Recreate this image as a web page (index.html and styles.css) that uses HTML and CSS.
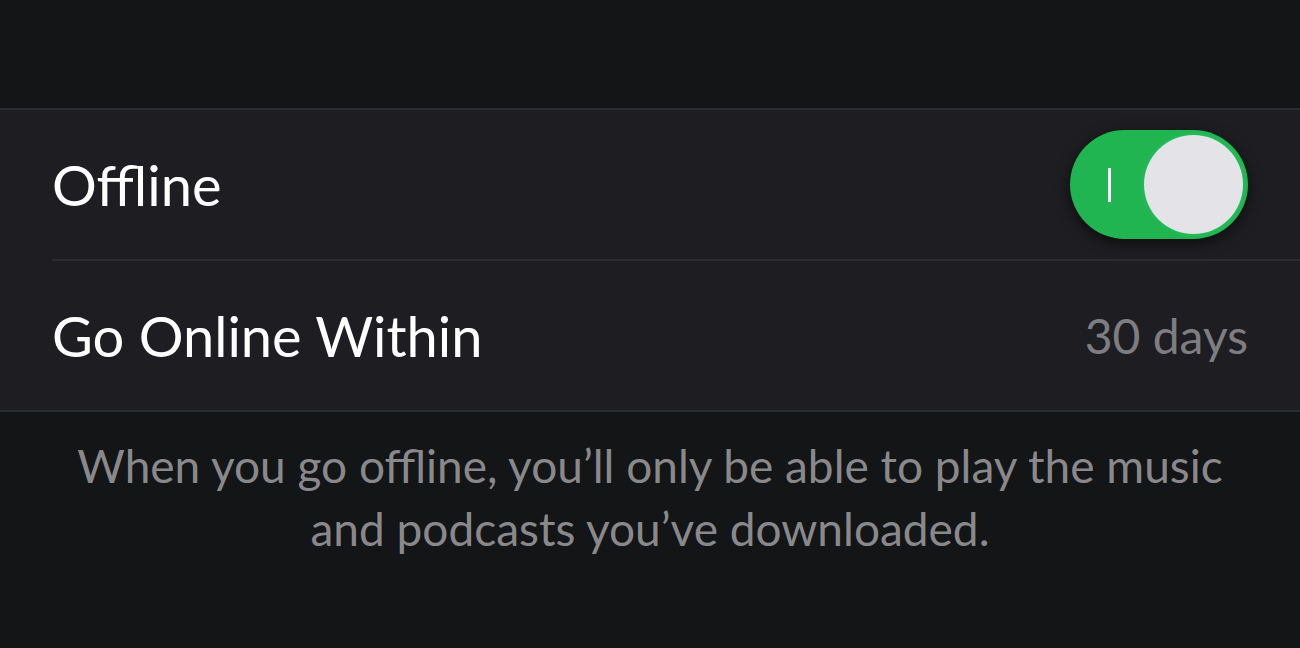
FILE: index.html
```html
<!DOCTYPE html>
<html lang="en">
<head>
    <meta charset="UTF-8">
    <meta name="viewport" content="width=device-width, initial-scale=1.0">
    <title>Offline Settings</title>
    <link rel="stylesheet" href="styles.css">
</head>
<body>
    <div class="top-space"></div>

    <div class="group">
        <div class="row">
            <span class="label">Offline</span>
            <div class="toggle on">
                <span class="toggle-mark"></span>
                <span class="knob"></span>
            </div>
        </div>
        <div class="row">
            <span class="label">Go Online Within</span>
            <span class="value">30 days</span>
        </div>
    </div>

    <p class="note">When you go offline, you’ll only be able to play the music and podcasts you’ve downloaded.</p>
</body>
</html>
```

FILE: styles.css
```css
body {
    margin: 0;
    padding: 0;
    background-color: #141517;
    color: #ffffff;
    font-family: Lato, "Noto Sans", sans-serif;
    height: 648px;
    overflow: hidden;
}
.top-space {
    height: 108px;
}
.group {
    background-color: #1e1e22;
    border-top: 2px solid #2c2c30;
    border-bottom: 2px solid #2c2c30;
    padding-left: 52px;
}
.row {
    display: flex;
    align-items: center;
    justify-content: space-between;
    height: 149px;
    padding-right: 52px;
}
.row + .row {
    border-top: 2px solid #2c2c30;
}
.label {
    font-size: 56px;
    color: #ffffff;
}
.value {
    font-size: 48px;
    color: #7e7e82;
}
.toggle {
    position: relative;
    width: 178px;
    height: 109px;
    border-radius: 55px;
    background-color: #21b552;
    box-shadow: 0 4px 14px rgba(0, 0, 0, 0.6);
}
.toggle-mark {
    position: absolute;
    left: 38px;
    top: 38px;
    width: 3px;
    height: 34px;
    background-color: #ffffff;
}
.knob {
    position: absolute;
    right: 5px;
    top: 5px;
    width: 99px;
    height: 99px;
    border-radius: 50%;
    background-color: #e3e3e8;
    box-shadow: 0 0 4px rgba(40, 200, 100, 0.8);
}
.note {
    margin: 22px auto 0;
    width: 1180px;
    text-align: center;
    font-size: 46px;
    line-height: 63px;
    color: #89898c;
}
```
